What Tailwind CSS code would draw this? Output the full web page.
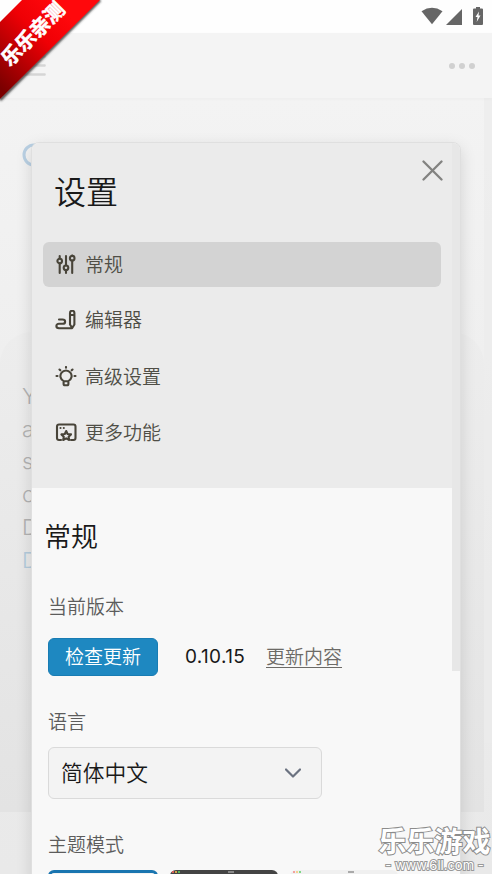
<!DOCTYPE html>
<html lang="zh-CN">
<head>
<meta charset="utf-8">
<meta name="viewport" content="width=device-width, initial-scale=1">
<title>设置</title>
<script src="https://cdn.jsdelivr.net/npm/@tailwindcss/browser@4"></script>
</head>
<body class="relative h-[874px] w-[492px] overflow-hidden bg-[#f3f3f3] font-['Inter','Noto_Sans_CJK_SC',sans-serif] text-[#191919]">
  <!-- Page behind the dialog -->
  <div class="flex h-full flex-col">
    <header class="flex h-[33px] shrink-0 items-start justify-end bg-[#fefefe] pr-2 pt-[7px]">
      <svg class="h-[18px] w-[64px]" viewBox="0 0 64 18" fill="#666">
        <path d="M1.500 4.200Q12-2.500 22.500 4.200L12 17.200Z"/>
        <path d="M42 2V18H26Z"/>
        <path d="M56 0h4v1.500h2q1 0 1 1v14.500q0 1-1 1h-8q-1 0-1-1V2.500q0-1 1-1h2Z"/>
        <path d="M59 4.500l-3.500 5.500h2l-.8 5 3.800-6.500h-2Z" fill="#fff"/>
      </svg>
    </header>
    <nav class="relative flex h-[65px] shrink-0 items-center justify-between bg-[#f4f4f4] pl-[22px] pr-[17px] shadow-[0_1px_4px_#00000008]">
      <svg class="mt-0.5 h-6 w-6" viewBox="0 0 24 24" stroke="#d5d5d5" stroke-width="2.700" stroke-linecap="round"><path d="M2 1.500h20.500M2 10.500h20.500M2 19.500h20.500"/></svg>
      <div class="flex gap-1"><i class="h-1.5 w-1.5 rounded-full bg-[#d0d0d0]"></i><i class="h-1.5 w-1.5 rounded-full bg-[#d0d0d0]"></i><i class="h-1.5 w-1.5 rounded-full bg-[#d0d0d0]"></i></div>
    </nav>
    <main class="flex min-h-0 grow bg-linear-to-b from-[#f3f3f3] via-[#ededed] to-[#e9e9e9]">
      <div class="flex grow flex-col">
        <svg class="ml-[22px] mt-[45px] h-6 w-6 shrink-0" viewBox="0 0 24 24" fill="none" stroke="#b9d0e3" stroke-width="3"><circle cx="12" cy="12" r="10"/></svg>
        <div class="mt-[165px] h-[480px] shrink-0 rounded-t-[32px] bg-linear-to-b from-[#ededed] to-[#e3e3e3] pl-[22px] pt-12 text-[22px] font-light leading-[32.700px] text-[#b2b2b2]">
          <p>Y</p><p>a</p><p>s</p><p>o</p><p>D</p><p class="text-[#b3cbdc]">D</p>
        </div>
      </div>
      <div class="h-[645px] w-2 bg-[#ebebeb]/60"></div>
    </main>
  </div>

  <!-- Settings dialog -->
  <section class="absolute left-[31px] top-[142px] flex h-[740px] w-[430px] overflow-hidden rounded-t-lg border border-[#dfdfdf] bg-[#f8f8f8] font-[350] shadow-[0_5px_16px_#00000020]">
    <div class="w-[420px] shrink-0">
      <div class="h-[345px] bg-[#ebebeb] pl-[11px] pr-[11px]">
        <div class="flex h-[99px] items-start justify-between">
          <h1 class="ml-[11px] mt-[26px] text-[32px] leading-[48px]">设置</h1>
          <svg class="-mr-0.5 mt-[17px] h-[21px] w-[21px]" viewBox="0 0 21 21" stroke="#828280" stroke-width="2.300" stroke-linecap="round"><path d="M1.500 1.500l18 18M19.500 1.500l-18 18"/></svg>
        </div>
        <ul class="flex flex-col gap-[11px] text-[19px] text-[#4f4e46]">
          <li class="flex h-[45px] items-center gap-2 rounded-md bg-[#d3d3d3] pl-3">
            <svg class="h-[22px] w-[22px]" viewBox="0 0 22 22" fill="none" stroke="#484439" stroke-width="2.100" stroke-linecap="round"><path d="M4.700 2V4.500M4.700 9.300v9.700M11 2V11.500M11 16.300V19M17.200 1.500v.5M17.200 6.500v12.500"/><circle cx="4.700" cy="7" r="2.300"/><circle cx="11" cy="13.800" r="2.300"/><circle cx="17.200" cy="4.200" r="2.300"/></svg>
            <span class="pt-[3px]">常规</span>
          </li>
          <li class="flex h-[45px] items-center gap-2 pl-3">
            <svg class="h-[22px] w-[22px]" viewBox="0 0 22 22" fill="none" stroke="#484439" stroke-width="2.100" stroke-linecap="round" stroke-linejoin="round"><path d="M15 3a2.200 2.200 0 0 1 4.400 0V14.500l-2.200 3.500L15 14.500ZM15 5h4.400M4 9.500H7.500c3.500 0 3.500 4.300 0 4.300H4c-3.500 0-3.500 4.400 0 4.400h13"/></svg>
            <span class="pt-0.5">编辑器</span>
          </li>
          <li class="flex h-[45px] items-center gap-2 pl-3">
            <svg class="h-[22px] w-[22px]" viewBox="0 0 22 22" fill="none" stroke="#484439" stroke-width="2.100" stroke-linecap="round" stroke-linejoin="round"><path d="M11 1v.8M4.500 3.500l.8.800M17.500 3.500l-.8.800M1.500 10h1M19.500 10h1M8.600 15.100a5.600 5.600 0 1 1 4.800 0v2.600q0 1.600-1.400 1.600h-2q-1.400 0-1.400-1.600ZM8.600 15.300h4.800"/></svg>
            <span class="pt-[3px]">高级设置</span>
          </li>
          <li class="flex h-[45px] items-center gap-2 pl-3">
            <svg class="h-[22px] w-[22px]" viewBox="0 0 22 22" fill="none" stroke="#484439" stroke-width="2.100" stroke-linecap="round" stroke-linejoin="round"><path d="M6 18H4Q2 18 2 16v-11.500Q2 2.500 4 2.500h14.500q2 0 2 2v11.500q0 2-2 2H16"/><path d="M11.200 9l1.400 3 3.400.4-2.400 2.300.6 3.300-3-1.600-3 1.600.6-3.300-2.400-2.300 3.400-.4Z"/><path d="M5.500 6h.01M8.800 6h.01"/></svg>
            <span class="pt-[3px]">更多功能</span>
          </li>
        </ul>
      </div>
      <div class="flex flex-col items-start pl-4">
        <h2 class="-ml-1 mt-[30px] text-[27px] leading-10">常规</h2>
        <h3 class="mt-9 text-[19px] leading-7 text-[#5c5c5c]">当前版本</h3>
        <div class="mt-4 flex h-[38px] items-center text-[19px]">
          <button class="h-[38px] w-[110px] rounded-md border border-[#187cb3] bg-[#1e88c1] pt-0.5 text-[#fff]">检查更新</button>
          <span class="ml-[27px] w-[81px] pt-px text-[19px] font-normal tracking-[0.350px]">0.10.15</span>
          <a class="pt-0.5 text-[#6c6a66] underline decoration-1 underline-offset-[3px]">更新内容</a>
        </div>
        <h3 class="mt-[33px] text-[19px] leading-7 text-[#5c5c5c]">语言</h3>
        <div class="mt-2.5 flex h-[52px] w-[274px] items-center justify-between rounded-md border-[1.500px] border-[#dadada] bg-[#f3f3f3] pl-3 pr-5 text-[21.750px]">
          <span>简体中文</span>
          <svg class="h-4 w-4" viewBox="0 0 16 16" fill="none" stroke="#6b7280" stroke-width="2.200" stroke-linecap="round" stroke-linejoin="round"><path d="M1 4.500l7 7 7-7"/></svg>
        </div>
        <h3 class="mt-[33px] text-[19px] leading-7 text-[#5c5c5c]">主题模式</h3>
        <div class="mt-2.5 flex gap-3">
          <div class="h-16 w-[110px] rounded-md border-[3px] border-[#1a75b0] bg-[#f3f3f3]"></div>
          <div class="flex h-16 w-[108px] justify-between rounded-md bg-[#444] pl-[2px] pr-11 pt-[1px]">
            <div class="flex gap-px"><i class="h-0.5 w-0.5 bg-[#d85f5b]"></i><i class="h-0.5 w-0.5 bg-[#d3a54a]"></i><i class="h-0.5 w-0.5 bg-[#54b65c]"></i></div><i class="h-0.5 w-1.5 bg-[#888]"></i>
          </div>
          <div class="flex h-16 w-[108px] justify-between rounded-md bg-[#f0f0f0] pl-[3px] pr-11 pt-[1px]">
            <div class="flex gap-px"><i class="h-0.5 w-0.5 bg-[#f3a29e]"></i><i class="h-0.5 w-0.5 bg-[#f3d391]"></i><i class="h-0.5 w-0.5 bg-[#7ed887]"></i></div><i class="h-0.5 w-1.5 bg-[#aaa]"></i>
          </div>
        </div>
      </div>
    </div>
    <div class="h-[528px] w-2 bg-[#e7e7e7]"></div>
  </section>

  <!-- Corner ribbon -->
  <div class="absolute left-0 top-0 h-[104px] w-[104px]">
    <svg class="h-full w-full" viewBox="0 0 104 104">
      <defs><linearGradient id="red" gradientUnits="userSpaceOnUse" x1="5" y1="92" x2="75" y2="22"><stop stop-color="#7b0000"/><stop offset=".65" stop-color="#ef0005"/><stop offset="1" stop-color="#ff080c"/></linearGradient><filter id="soft"><feGaussianBlur stdDeviation="1.200"/></filter></defs>
      <path d="M0 100L100 0" stroke="#444" stroke-width="3" filter="url(#soft)"/>
      <path d="M22 0H100L0 99V22Z" fill="url(#red)"/>
    </svg>
    <span class="absolute left-[-7px] top-[22px] w-20 -rotate-45 whitespace-nowrap text-center text-[20px] font-bold leading-[24px] text-white [-webkit-text-stroke:0.600px_white]">乐乐亲测</span>
  </div>

  <!-- Site watermark -->
  <div class="absolute left-[377px] top-[825px] flex w-[115px] flex-col items-center text-white">
    <p class="h-[34px] whitespace-nowrap text-[28px] font-bold leading-[34px] [paint-order:stroke_fill] [-webkit-text-stroke:2px_#8c8c8c]">乐乐游戏</p>
    <p class="whitespace-nowrap text-[13px] font-normal leading-[13px] [paint-order:stroke_fill] [-webkit-text-stroke:2px_#999]">- www.6ll.com -</p>
  </div>
</body>
</html>
